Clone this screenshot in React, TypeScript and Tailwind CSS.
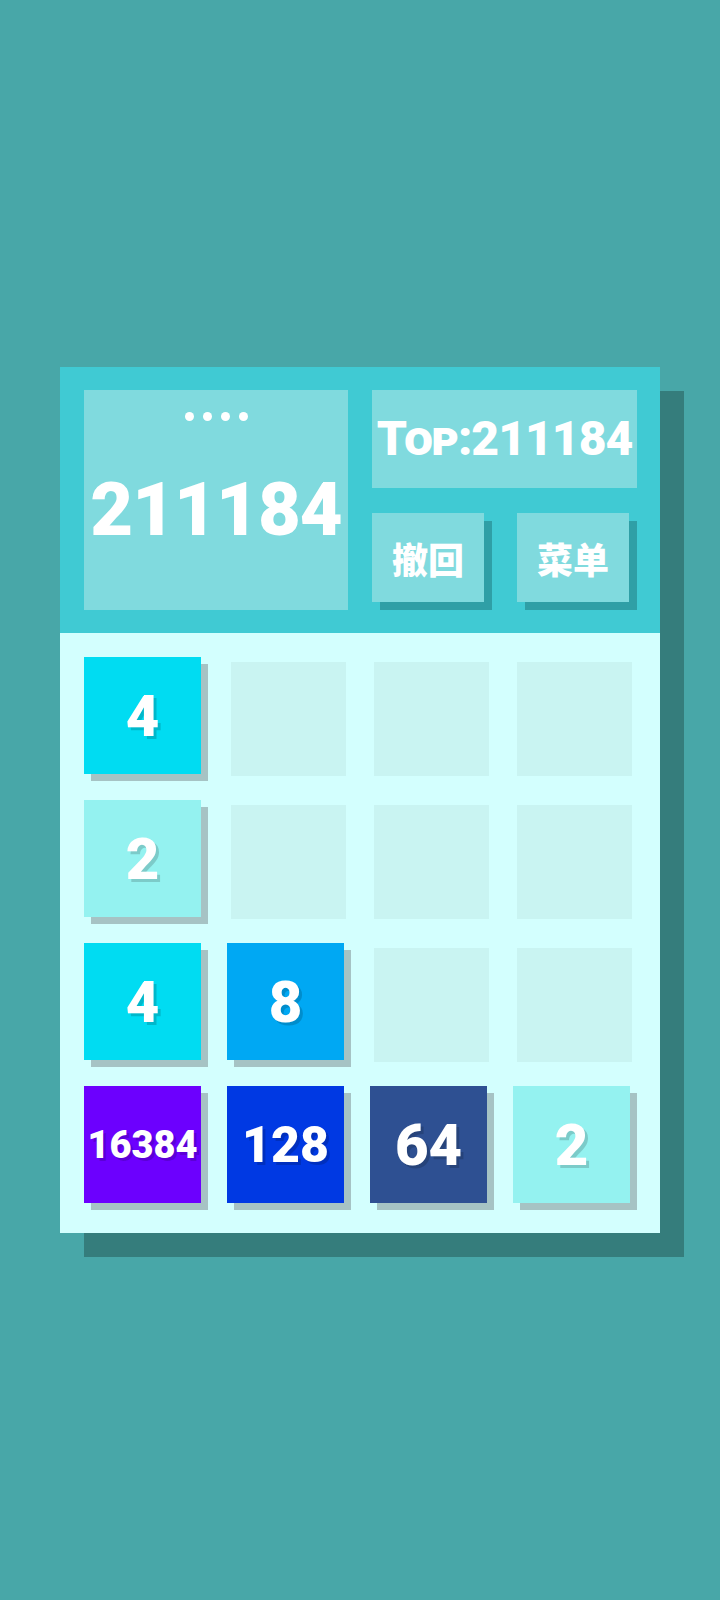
import React from "react";

type Cell = number | null;

const board: Cell[][] = [
  [4, null, null, null],
  [2, null, null, null],
  [4, 8, null, null],
  [16384, 128, 64, 2],
];

const tileBg: Record<number, string> = {
  2: "bg-[#94f2f0]",
  4: "bg-[#00dcf2]",
  8: "bg-[#00a8f3]",
  64: "bg-[#2e5092]",
  128: "bg-[#0039e3]",
  16384: "bg-[#6c00fe]",
};

function tileText(v: number): string {
  const n = String(v).length;
  if (n <= 2) return "text-[58px]";
  if (n === 3) return "text-[50px]";
  if (n === 4) return "text-[44px]";
  return "text-[38px]";
}

function Tile({ value }: { value: Cell }) {
  if (value === null) {
    return (
      <div className="w-[117px] h-[117px]">
        <div className="ml-[4px] mt-[5px] w-[115px] h-[114px] bg-[#c9f4f2]" />
      </div>
    );
  }
  return (
    <div
      className={`w-[117px] h-[117px] ${tileBg[value]} shadow-[7px_7px_0_0_#a6c3c4] flex items-center justify-center`}
    >
      <span
        className={`${tileText(value)} leading-none font-black text-white [text-shadow:3px_3px_0_rgba(0,0,0,0.16)]`}
      >
        {value}
      </span>
    </div>
  );
}

function HeaderButton({ label }: { label: string }) {
  return (
    <button className="w-[112px] h-[89px] bg-[#80dade] shadow-[8px_8px_0_0_#2f9fa6] flex items-center justify-center">
      <span className="text-[36px] leading-none font-black text-white [font-family:'Noto_Sans_CJK_SC','Noto_Sans',sans-serif]">
        {label}
      </span>
    </button>
  );
}

export default function App() {
  return (
    <div className="min-h-[1600px] w-full bg-[#48a7a8] flex items-center justify-center [font-family:Roboto,'Noto_Sans',sans-serif]">
      <div className="w-[600px] shadow-[24px_24px_0_0_#357d7c]">
        {/* score header */}
        <div className="h-[266px] bg-[#40cad3] pt-[23px] pl-[24px] pr-[23px] flex gap-[24px]">
          <div className="w-[264px] h-[220px] bg-[#80dade] flex flex-col items-center">
            <div className="mt-[22px] flex gap-[9px]">
              <span className="w-[9px] h-[9px] rounded-full bg-white" />
              <span className="w-[9px] h-[9px] rounded-full bg-white" />
              <span className="w-[9px] h-[9px] rounded-full bg-white" />
              <span className="w-[9px] h-[9px] rounded-full bg-white" />
            </div>
            <div className="mt-[52px] text-[74px] leading-none font-black text-white tracking-[-1px]">
              211184
            </div>
          </div>
          <div className="flex-1 flex flex-col">
            <div className="h-[98px] bg-[#80dade] flex items-center justify-center">
              <span className="text-[48px] leading-none font-black text-white tracking-[-1px] [font-variant:small-caps]">
                Top:211184
              </span>
            </div>
            <div className="mt-[25px] pr-[8px] flex justify-between">
              <HeaderButton label="撤回" />
              <HeaderButton label="菜单" />
            </div>
          </div>
        </div>
        {/* playing field */}
        <div className="h-[600px] bg-[#d3fffe] pt-[24px] pl-[24px] grid grid-cols-[repeat(4,117px)] auto-rows-[117px] gap-x-[26px] gap-y-[26px] content-start">
          {board.flatMap((row, r) =>
            row.map((v, c) => <Tile key={`${r}-${c}`} value={v} />)
          )}
        </div>
      </div>
    </div>
  );
}
